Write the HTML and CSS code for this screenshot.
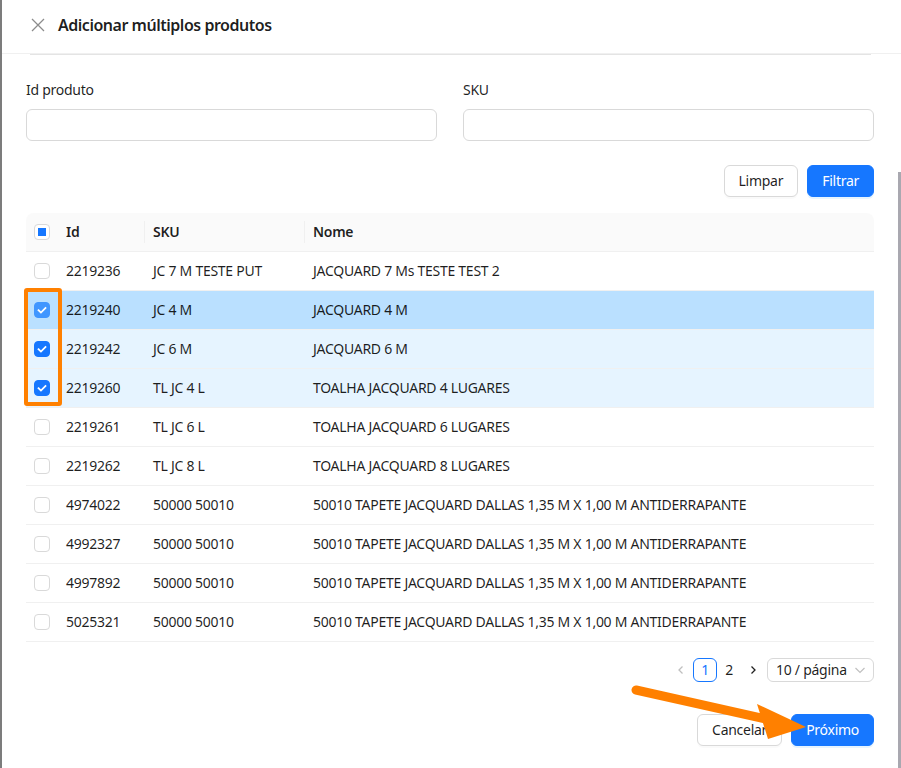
FILE: index.html
```html
<!DOCTYPE html>
<html lang="pt-BR">
<head>
<meta charset="utf-8">
<title>Adicionar múltiplos produtos</title>
<link rel="stylesheet" href="styles.css">
</head>
<body>
<div class="drawer">
  <header class="drawer-header">
    <svg class="close" viewBox="0 0 14 14" aria-hidden="true"><path d="M1 1L13 13M13 1L1 13"/></svg>
    <h1 class="title">Adicionar múltiplos produtos</h1>
  </header>
  <div class="drawer-body">
    <div class="edge"></div>
    <div class="filters">
      <div class="field"><label class="label">Id produto</label><input class="input" type="text"></div>
      <div class="field"><label class="label">SKU</label><input class="input" type="text"></div>
    </div>
    <div class="actions">
      <button class="btn">Limpar</button>
      <button class="btn primary">Filtrar</button>
    </div>
    <table class="grid">
      <colgroup><col class="c-check"><col class="c-id"><col class="c-sku"><col></colgroup>
      <thead>
        <tr>
          <th><span class="cb indeterminate"></span></th>
          <th class="sep">Id</th>
          <th class="sep">SKU</th>
          <th>Nome</th>
        </tr>
      </thead>
      <tbody>
        <tr><td><span class="cb"></span></td><td>2219236</td><td>JC 7 M TESTE PUT</td><td>JACQUARD 7 Ms TESTE TEST 2</td></tr>
        <tr class="sel hover"><td><span class="cb on"><svg viewBox="0 0 16 16"><path d="M4 8.2L6.8 11L12 5.6"/></svg></span></td><td>2219240</td><td>JC 4 M</td><td>JACQUARD 4 M</td></tr>
        <tr class="sel"><td><span class="cb on"><svg viewBox="0 0 16 16"><path d="M4 8.2L6.8 11L12 5.6"/></svg></span></td><td>2219242</td><td>JC 6 M</td><td>JACQUARD 6 M</td></tr>
        <tr class="sel"><td><span class="cb on"><svg viewBox="0 0 16 16"><path d="M4 8.2L6.8 11L12 5.6"/></svg></span></td><td>2219260</td><td>TL JC 4 L</td><td>TOALHA JACQUARD 4 LUGARES</td></tr>
        <tr><td><span class="cb"></span></td><td>2219261</td><td>TL JC 6 L</td><td>TOALHA JACQUARD 6 LUGARES</td></tr>
        <tr><td><span class="cb"></span></td><td>2219262</td><td>TL JC 8 L</td><td>TOALHA JACQUARD 8 LUGARES</td></tr>
        <tr><td><span class="cb"></span></td><td>4974022</td><td>50000 50010</td><td>50010 TAPETE JACQUARD DALLAS 1,35 M X 1,00 M ANTIDERRAPANTE</td></tr>
        <tr><td><span class="cb"></span></td><td>4992327</td><td>50000 50010</td><td>50010 TAPETE JACQUARD DALLAS 1,35 M X 1,00 M ANTIDERRAPANTE</td></tr>
        <tr><td><span class="cb"></span></td><td>4997892</td><td>50000 50010</td><td>50010 TAPETE JACQUARD DALLAS 1,35 M X 1,00 M ANTIDERRAPANTE</td></tr>
        <tr><td><span class="cb"></span></td><td>5025321</td><td>50000 50010</td><td>50010 TAPETE JACQUARD DALLAS 1,35 M X 1,00 M ANTIDERRAPANTE</td></tr>
      </tbody>
    </table>
    <div class="pager">
      <span class="pg-item disabled"><svg viewBox="0 0 10 10"><path d="M6.5 1.5L3 5L6.5 8.5"/></svg></span>
      <span class="pg-item active">1</span>
      <span class="pg-item">2</span>
      <span class="pg-item"><svg viewBox="0 0 10 10"><path d="M3.5 1.5L7 5L3.5 8.5"/></svg></span>
      <span class="pg-size">10 / página<svg viewBox="0 0 12 12"><path d="M1.5 4L6 8.5L10.5 4"/></svg></span>
    </div>
    <div class="footer">
      <button class="btn">Cancelar</button>
      <button class="btn primary">Próximo</button>
    </div>
  </div>
  <div class="highlight"></div>
  <svg class="arrow" viewBox="0 0 200 80" aria-hidden="true">
    <path class="shaft" d="M16 15L146 44"/>
    <polygon class="head" points="137,29 186,52 148,64"/>
  </svg>
  <div class="scrollbar"></div>
</div>
</body>
</html>
```
FILE: styles.css
```css
* { box-sizing: border-box; }
html, body { margin: 0; padding: 0; background: #fff; }
body {
  font-family: "Noto Sans", "Open Sans", sans-serif;
  font-size: 14px;
  line-height: 22px;
  letter-spacing: -0.27px;
  color: rgba(0, 0, 0, 0.88);
}
.drawer {
  position: relative;
  width: 901px;
  height: 768px;
  overflow: hidden;
  border-left: 2px solid #7c7c7c;
  background: #fff;
}
.drawer-header {
  display: flex;
  align-items: center;
  height: 54px;
  padding-left: 29px;
  border-bottom: 1px solid #f0f0f0;
}
.close {
  width: 14px;
  height: 14px;
  margin-top: -3px;
  fill: none;
  stroke: rgba(0, 0, 0, 0.45);
  stroke-width: 1.3;
}
.title {
  margin: -3px 0 0 13px;
  font-size: 16px;
  font-weight: 600;
  line-height: 24px;
  letter-spacing: -0.48px;
}
.drawer-body {
  padding: 0 27px 0 24px;
}
.edge {
  height: 1px;
  margin: 0 3px 0 4px;
  background: #e4e4e4;
}
.filters {
  display: grid;
  grid-template-columns: 1fr 1fr;
  gap: 26px;
  margin-top: 24px;
}
.field { display: flex; flex-direction: column; }
.label { padding-bottom: 8px; }
.input {
  width: 100%;
  height: 32px;
  margin: 0;
  border: 1px solid #d9d9d9;
  border-radius: 6px;
  background: #fff;
  font: inherit;
}
.actions, .footer {
  display: flex;
  justify-content: flex-end;
  gap: 9px;
}
.actions { margin-top: 24px; }
.footer { margin-top: 32px; }
.btn {
  height: 32px;
  padding: 4px 14px;
  border: 1px solid #d9d9d9;
  border-radius: 6px;
  background: #fff;
  color: rgba(0, 0, 0, 0.88);
  font: inherit;
  letter-spacing: inherit;
  line-height: 22px;
  box-shadow: 0 2px 0 rgba(0, 0, 0, 0.02);
}
.btn.primary {
  background: #1677ff;
  border-color: #1677ff;
  color: #fff;
  box-shadow: 0 2px 0 rgba(5, 145, 255, 0.1);
}
.grid {
  width: 100%;
  margin-top: 16px;
  border-collapse: separate;
  border-spacing: 0;
  table-layout: fixed;
}
.c-check { width: 32px; }
.c-id { width: 87px; }
.c-sku { width: 160px; }
.grid th, .grid td {
  padding: 8px 8px;
  text-align: left;
  border-bottom: 1px solid #f0f0f0;
  white-space: nowrap;
  vertical-align: middle;
}
.grid th {
  position: relative;
  background: #fafafa;
  font-weight: 600;
}
.grid th:first-child { border-top-left-radius: 8px; }
.grid th:last-child { border-top-right-radius: 8px; }
.grid th.sep::after {
  content: "";
  position: absolute;
  right: 0;
  top: 50%;
  width: 1px;
  height: 22px;
  transform: translateY(-50%);
  background: #f0f0f0;
}
.grid tr.sel td { background: #e6f4ff; }
.grid tr.sel.hover td { background: #bae0ff; }
.cb {
  display: flex;
  align-items: center;
  justify-content: center;
  width: 16px;
  height: 16px;
  border: 1px solid #d9d9d9;
  border-radius: 4px;
  background: #fff;
}
.cb.indeterminate::after {
  content: "";
  width: 8px;
  height: 8px;
  background: #1677ff;
}
.cb.on {
  border-color: #1677ff;
  background: #1677ff;
}
.sel.hover .cb.on { border-color: #4096ff; background: #4096ff; }
.cb svg {
  width: 14px;
  height: 14px;
  fill: none;
  stroke: #fff;
  stroke-width: 2;
  stroke-linecap: square;
}
.pager {
  display: flex;
  justify-content: flex-end;
  align-items: center;
  margin-top: 16px;
  height: 24px;
}
.pg-item {
  display: flex;
  align-items: center;
  justify-content: center;
  width: 24px;
  height: 24px;
  border: 1px solid transparent;
  border-radius: 6px;
  line-height: 22px;
}
.pg-item.active {
  border-color: #1677ff;
  color: #1677ff;
}
.pg-item svg {
  width: 10px;
  height: 10px;
  fill: none;
  stroke: rgba(0, 0, 0, 0.88);
  stroke-width: 1.3;
}
.pg-item.disabled svg { stroke: rgba(0, 0, 0, 0.25); }
.pg-size {
  display: flex;
  align-items: center;
  justify-content: space-between;
  width: 107px;
  height: 24px;
  margin-left: 2px;
  padding: 0 7px 0 8px;
  border: 1px solid #d9d9d9;
  border-radius: 6px;
}
.pg-size svg {
  width: 12px;
  height: 12px;
  fill: none;
  stroke: rgba(0, 0, 0, 0.25);
  stroke-width: 1.2;
}
.highlight {
  position: absolute;
  left: 22px;
  top: 288px;
  width: 38px;
  height: 118px;
  border: 4px solid #ff8000;
  border-radius: 3px;
}
.arrow {
  position: absolute;
  left: 618px;
  top: 675px;
  width: 200px;
  height: 80px;
}
.arrow .shaft {
  stroke: #ff8000;
  stroke-width: 9;
  stroke-linecap: round;
  fill: none;
}
.arrow .head { fill: #ff8000; }
.scrollbar {
  position: absolute;
  right: 0;
  top: 172px;
  bottom: 0;
  width: 3px;
  background: #a9a8b0;
}
```
